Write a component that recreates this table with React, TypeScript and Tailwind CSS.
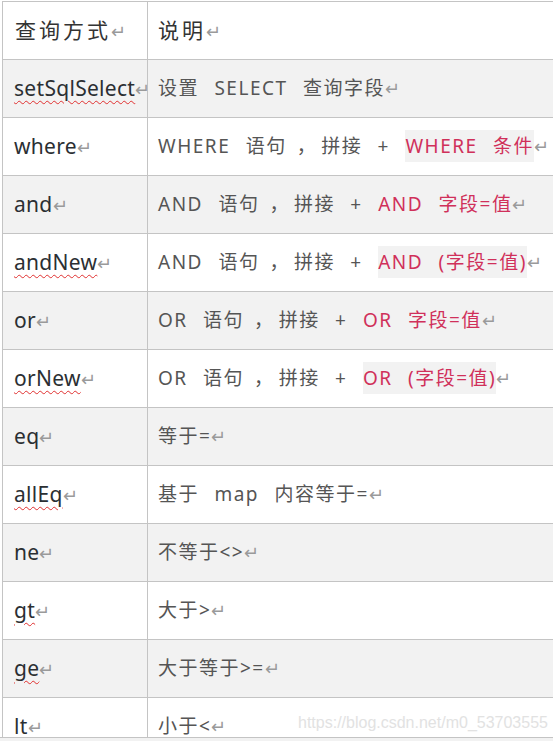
import React from "react"

type Row = {
  name: string
  typo?: boolean
  text: string
  red?: string
}

const rows: Row[] = [
  { name: "setSqlSelect", typo: true, text: "设置 SELECT 查询字段" },
  { name: "where", text: "WHERE 语句，拼接 + ", red: "WHERE 条件" },
  { name: "and", text: "AND 语句，拼接 + ", red: "AND 字段=值" },
  { name: "andNew", typo: true, text: "AND 语句，拼接 + ", red: "AND (字段=值)" },
  { name: "or", text: "OR 语句，拼接 + ", red: "OR 字段=值" },
  { name: "orNew", typo: true, text: "OR 语句，拼接 + ", red: "OR (字段=值)" },
  { name: "eq", text: "等于=" },
  { name: "allEq", typo: true, text: "基于 map 内容等于=" },
  { name: "ne", text: "不等于<>" },
  { name: "gt", typo: true, text: "大于>" },
  { name: "ge", typo: true, text: "大于等于>=" },
  { name: "lt", typo: true, text: "小于<" },
]

const Enter = () => (
  <span className="text-[18px] text-[#9a9a9a] tracking-normal [word-spacing:0px]">↵</span>
)

// the full-width comma sits a bit off its neighbours in the original doc
const withComma = (text: string) => {
  const parts = text.split("，")
  if (parts.length < 2) return text
  return (
    <>
      {parts[0]}
      <span className="pl-[10px] pr-[4px]">，</span>
      {parts[1]}
    </>
  )
}

export default function App() {
  return (
    <div
      className="w-[553px] h-[741px] overflow-hidden bg-[#f2f2f2]"
      style={{ fontFamily: '"Noto Sans", "Noto Sans CJK SC", sans-serif' }}
    >
      <div className="h-[738px] overflow-hidden border-b border-[#c4c4c4] pt-px pl-[2px] bg-white">
        <table className="w-[640px] border-collapse table-fixed">
          <colgroup>
            <col className="w-[145px]" />
            <col />
          </colgroup>
          <thead>
            <tr className="h-[58px] bg-white">
              <th className="border border-[#c4c4c4] pl-[12px] text-left font-normal text-[21px] text-[#333] tracking-[3px]">
                查询方式<Enter />
              </th>
              <th className="border border-[#c4c4c4] pl-[10px] text-left font-normal text-[21px] text-[#333] tracking-[3px]">
                说明<Enter />
              </th>
            </tr>
          </thead>
          <tbody>
            {rows.map((row, i) => (
              <tr key={row.name} className={`h-[58px] ${i % 2 === 0 ? "bg-[#f2f2f2]" : "bg-white"}`}>
                <td className="border border-[#c4c4c4] pl-[11px] text-[21px] text-[#2b2f33] whitespace-nowrap tracking-[0.3px]">
                  <span className={row.typo ? "underline decoration-wavy decoration-[#e03030] decoration-1 underline-offset-4" : ""}>
                    {row.name}
                  </span>
                  <Enter />
                </td>
                <td className="relative border border-[#c4c4c4] pl-[10px] text-[19px] text-[#555] whitespace-pre tracking-[1.5px] [word-spacing:9px]">
                  {withComma(row.text)}
                  {row.red && (
                    <span className="bg-[#f2f2f2] text-[#d0305a] py-[3px]">{row.red}</span>
                  )}
                  <Enter />
                  {row.name === "lt" && (
                    <span
                      className="absolute left-[150px] top-[13px] text-[16px] tracking-normal [word-spacing:0px] text-[#e2e2e2]"
                      style={{ fontFamily: '"Liberation Sans", Arial, sans-serif' }}
                    >
                      https://blog.csdn.net/m0_53703555
                    </span>
                  )}
                </td>
              </tr>
            ))}
          </tbody>
        </table>
      </div>
    </div>
  )
}
